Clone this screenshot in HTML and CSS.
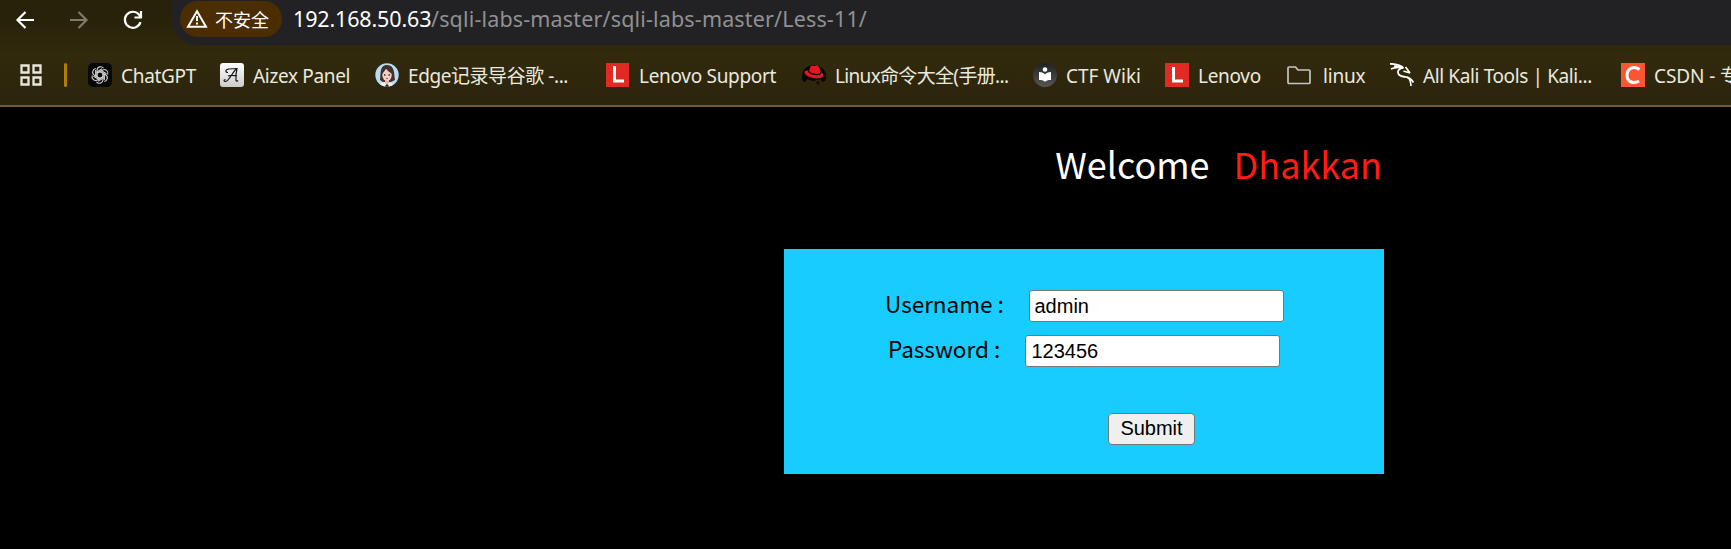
FILE: index.html
```html
<!DOCTYPE html>
<html lang="zh-CN">
<head>
<meta charset="utf-8">
<title>Less-11</title>
<link rel="stylesheet" href="styles.css">
</head>
<body>
<header class="browser">
  <div class="toolbar">
    <svg class="nav back" width="20" height="20" viewBox="0 0 20 20"><path d="M19 10H3M10.500 2l-8 8 8 8"/></svg>
    <svg class="nav forward" width="20" height="20" viewBox="0 0 20 20"><path d="M1 10h16M9.500 2l8 8-8 8"/></svg>
    <svg class="nav reload" width="20" height="20" viewBox="0 0 20 20"><path d="M17.500 12.200A8 8 0 1 1 16 4.600L17.800 7M18 1v6.500h-6.500"/></svg>
    <div class="address">
      <div class="insecure">
        <svg width="22" height="20" viewBox="0 0 22 20"><path class="tri" d="M11 2.200L20 17.800H2Z"/><path class="bang" d="M11 7v5M11 13.500v2"/></svg>
        <span class="warn">不安全</span>
      </div>
      <span class="host">192.168.50.63</span><span class="path">/sqli-labs-master/sqli-labs-master/Less-11/</span>
    </div>
  </div>
  <nav class="bookmarks">
    <svg class="apps" width="22" height="22" viewBox="0 0 22 22"><path d="M1.500 1.500h7v7h-7zM13.500 1.500h7v7h-7zM1.500 13.500h7v7h-7zM13.500 13.500h7v7h-7z"/></svg>
    <i class="divider"></i>
    <a class="bm b1"><svg width="24" height="24" viewBox="0 0 24 24"><rect width="24" height="24" rx="5" fill="#080808"/><g fill="none" stroke="#ccc" stroke-width="1.100"><path id="k" d="M9 13.800V7.200a3.600 3.600 0 0 1 6.500-2M9 10.200l4.300-2.500 5.200 3"/><use href="#k" transform="rotate(60 12 12)"/><use href="#k" transform="rotate(120 12 12)"/><use href="#k" transform="rotate(180 12 12)"/><use href="#k" transform="rotate(240 12 12)"/><use href="#k" transform="rotate(300 12 12)"/></g></svg><span>ChatGPT</span></a>
    <a class="bm b2"><svg width="24" height="24" viewBox="0 0 24 24"><defs><linearGradient id="w" x2="0" y2="1"><stop stop-color="#fff"/><stop offset="1" stop-color="#ccc"/></linearGradient></defs><rect width="24" height="24" rx="3" fill="url(#w)"/><path d="M8 9.500C5 9.500 5 6.500 9 6c4-.5 5-.5 8-.5-1 4-1.500 7-1 12 .5 1 1.500.5 2 0M16.500 6C12 9 10 17.500 5.500 18.500c-2 0-2-2 0-2M8 13c3-1 5-1 9 0" fill="none" stroke="#151515" stroke-width="1.200"/></svg><span>Aizex Panel</span></a>
    <a class="bm b3"><svg width="24" height="24" viewBox="0 0 24 24"><defs><clipPath id="c"><circle cx="12" cy="12" r="11.700"/></clipPath></defs><g clip-path="url(#c)"><rect width="24" height="24" fill="#b8dcf2"/><path d="M5 17C6 12 4 2 12 2s7 9 8 15l-4 2H8Z" fill="#45302f"/><path d="M4 24c1-5 5-5 8-5s6 1 7 5" fill="#f4eeee"/><path d="M10 16h4v4l-2 2-2-2z" fill="#e8b6a7"/><ellipse cx="12" cy="12" rx="4.700" ry="6" fill="#f5cfc2"/><path d="M7 11c1-1 3-3 4-6 1 3 4 4 6 6l-1-7-4-2-4 2z" fill="#45302f"/><path d="M9 12h1.500M13.500 12H15" stroke="#432a2a" stroke-width="1.300"/><path d="M11 15.500h2" stroke="#c55"/><path d="M9 24l3-3 3 3z" fill="#222"/></g></svg><span>Edge记录导谷歌 -...</span></a>
    <a class="bm b4"><svg width="24" height="24" viewBox="0 0 24 24"><rect width="23" height="24" fill="#e22a22"/><path d="M8.500 3v15H18" fill="none" stroke="#fff" stroke-width="3"/></svg><span>Lenovo Support</span></a>
    <a class="bm b5"><svg width="24" height="24" viewBox="0 0 24 24"><path d="M1 18A12 11.500 0 1 1 23 18l-3 1-1-3-8 2-6-2-2 3z" fill="#050505"/><path d="M7 8L8.500 3.500c1-2 2.500-.5 4-.5 2-1 3-1 4.500 1l2 5c2 1 3 3 1.500 5-3 3-16 1-18-4-.5-2 1.500-3 4.500-2Z" fill="#e5161e"/><path d="M6.500 8c1 3 8 4.500 11.500 3l1-2" fill="none" stroke="#050505" stroke-width="1.200"/><path d="M14 20l3-1-1 3" fill="none" stroke="#050505"/></svg><span>Linux命令大全(手册...</span></a>
    <a class="bm b6"><svg width="24" height="24" viewBox="0 0 24 24"><defs><linearGradient id="g" x2="0" y2="1"><stop stop-color="#222"/><stop offset="1" stop-color="#555"/></linearGradient></defs><circle cx="12" cy="12" r="12" fill="url(#g)"/><circle cx="12" cy="6.500" r="2.300" fill="#fff"/><path d="M6 9c3 0 5 1 6 2.500C13 10 15 9 18 9v8c-3 0-5 .5-6 2-1-1.500-3-2-6-2z" fill="#fff"/></svg><span>CTF Wiki</span></a>
    <a class="bm b7"><svg width="24" height="24" viewBox="0 0 24 24"><rect width="24" height="24" fill="#e22a22"/><path d="M8.500 4v14H18" fill="none" stroke="#fff" stroke-width="3"/></svg><span>Lenovo</span></a>
    <a class="bm b8"><svg width="24" height="24" viewBox="0 0 24 24"><path d="M1 19.500V5a1 1 0 0 1 1-1h6.500l2.500 3h11a1 1 0 0 1 1 1v11.500a1 1 0 0 1-1 1H2a1 1 0 0 1-1-1Z" fill="none" stroke="#c5c5c5" stroke-width="1.700"/></svg><span>linux</span></a>
    <a class="bm b9"><svg width="24" height="24" viewBox="0 0 24 24"><g fill="none" stroke="#fff" stroke-width="1.700"><path d="M0 .8c5 0 10 1 13.500 4.200M1 6c4-2 8-2 12-1M4 3l8 1.500M13.500 5C9 5 7 8 8.500 11c2.500 4 7 1.500 10.500 4.500 1.500 2 2 4 2 7.500M13 14c4-.5 8 1 10.500 5.500M15.500 4l4.500 6c-2-1-4-1-6.500-2"/></g></svg><span>All Kali Tools | Kali...</span></a>
    <a class="bm b10"><svg width="24" height="24" viewBox="0 0 24 24"><rect width="24" height="24" fill="#fc5531"/><path d="M18.500 6.500C13 2.500 6 5 6 12.500c0 7 7 8.500 12 5.500" fill="none" stroke="#fff" stroke-width="3"/></svg><span>CSDN - 专</span></a>
  </nav>
</header>
<main class="page">
  <h1 class="welcome"><span>Welcome</span><span class="name">Dhakkan</span></h1>
  <form class="login">
    <div class="row user"><label for="u">Username :</label><input id="u" type="text" value="admin"></div>
    <div class="row pass"><label for="p">Password :</label><input id="p" type="text" value="123456"></div>
    <button class="submit" type="button">Submit</button>
  </form>
</main>
</body>
</html>
```
FILE: styles.css
```css
* { box-sizing: border-box; }
body { margin: 0; background: #000; height: 549px; overflow: hidden; }
svg { display: block; flex: none; }
.browser { height: 107px; border-bottom: 2px solid #755a33; background: linear-gradient(#28220b 0, #28220b 20px, #322a0d 55px, #2a240c 105px); font-family: "Noto Sans", "Noto Sans CJK SC", sans-serif; color: #ebe9df; overflow: hidden; }
.toolbar { display: flex; height: 45px; padding-left: 15px; }
.nav { margin-top: 10px; fill: none; stroke: #fff; stroke-width: 2.2; }
.forward { margin-left: 34px; stroke: #817b69; }
.reload { margin-left: 34px; }
.address { margin-left: 29px; flex: 1; height: 45px; background: #222224; border-radius: 0 0 0 26px; display: flex; align-items: flex-start; padding-left: 8px; white-space: nowrap; font-size: 21.5px; line-height: 38px; }
.insecure { width: 102px; height: 36px; margin-top: 1px; border-radius: 18px; background: #4c2d02; display: flex; align-items: center; padding-left: 6px; gap: 7px; color: #fff; font-size: 18px; }
.insecure path { fill: none; stroke: #fff; stroke-width: 2; }
.warn { padding-top: 2px; }
.host { margin-left: 11px; color: #fff; width: 138px; letter-spacing: -.15px; }
.path { color: #919193; letter-spacing: .16px; }
.bookmarks { display: flex; align-items: center; height: 60px; padding-left: 20px; font-size: 19px; white-space: nowrap; }
.divider { flex: none; width: 3px; height: 24px; margin-left: 22px; background: #af7d08; border-radius: 2px; }
.apps { fill: none; stroke: #e8e6dd; stroke-width: 2.3; }
.bm { display: flex; align-items: center; gap: 9px; flex: none; height: 24px; line-height: 24px; }
.bm span { padding-top: 2px; }
.b1 { margin-left: 21px; width: 132px; letter-spacing: -.3px; }
.b2 { width: 155px; letter-spacing: -.33px; }
.b3 { width: 231px; letter-spacing: -.43px; }
.b4 { width: 196px; letter-spacing: -.3px; }
.b5 { width: 231px; letter-spacing: -.67px; }
.b6 { width: 132px; }
.b7 { width: 122px; letter-spacing: -.3px; }
.b8 { width: 103px; gap: 12px; letter-spacing: -.2px; }
.b9 { width: 231px; letter-spacing: -.38px; }
.b10 { letter-spacing: -.1px; }
.page { width: 600px; margin-left: 784px; font-family: "Noto Sans CJK SC", sans-serif; }
.welcome { margin: 0; height: 142px; padding-top: 27px; display: flex; justify-content: flex-end; gap: 24px; padding-right: 2px; color: #fff; font-size: 36px; line-height: 58px; font-weight: 400; }
.name { color: #ff1c14; }
.login { height: 225px; background: #18ccff; padding-top: 41px; display: flex; flex-direction: column; }
.row { display: flex; align-items: center; height: 32px; font-size: 22.5px; line-height: 32px; }
.user { padding-left: 101px; }
.pass { margin-top: 13px; padding-left: 104px; }
.row label { width: 144px; flex: none; padding-bottom: 7px; white-space: pre; }
.pass label { width: 137px; }
.row input { width: 255px; height: 32px; border: 1px solid #767676; border-radius: 3px; padding: 1px 4.5px; background: #fff; color: #000; font: 20px "Liberation Sans", sans-serif; }
.pass input { padding-left: 5.5px; }
.submit { margin: 46px 0 0 324px; width: 87px; height: 32px; padding: 0 0 2px; border: 1px solid #767676; border-radius: 4px; background: #efefef; color: #000; font: 20px "Liberation Sans", sans-serif; }
```
